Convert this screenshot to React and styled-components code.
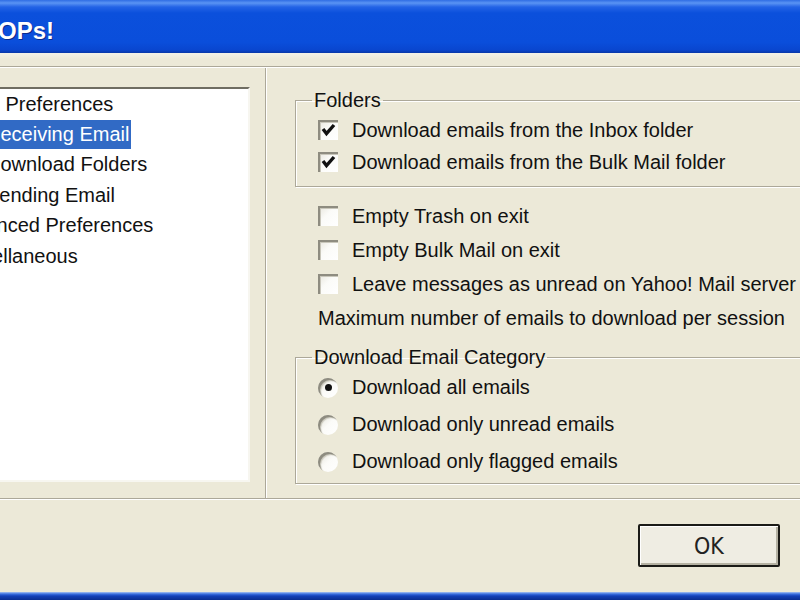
import React from 'react'
import styled, { createGlobalStyle } from 'styled-components'

const GlobalStyle = createGlobalStyle`
  html, body {
    margin: 0;
    padding: 0;
  }
  body {
    background: #ECE9D8;
    font-family: "Liberation Sans", Arial, sans-serif;
    overflow: hidden;
  }
`

const Screen = styled.div`
  width: 800px;
  height: 600px;
  overflow: hidden;
  display: flex;
  flex-direction: column;
  background: #ECE9D8;
  color: #111;
`

const TitleBar = styled.div`
  flex: none;
  height: 53px;
  display: flex;
  align-items: center;
  padding-top: 8px;
  box-sizing: border-box;
  background: linear-gradient(
    to bottom,
    #2f6de4 0,
    #5a94f4 3px,
    #2363e6 7px,
    #0b50dc 13px,
    #0a4edb 80%,
    #0946cf 94%,
    #0737a8 100%
  );
`

const TitleText = styled.span`
  margin-left: -34px;
  color: #fff;
  font: bold 24px "Liberation Sans", Arial, sans-serif;
  text-shadow: 1px 1px 0 #0a2a8e;
  white-space: nowrap;
`

const MenuGap = styled.div`
  flex: none;
  height: 14px;
  box-sizing: border-box;
  border-bottom: 1px solid #aca899;
  background: linear-gradient(to bottom, #f3f1e7, #ece9d8 6px);
`

const Main = styled.div`
  flex: none;
  height: 432px;
  box-sizing: border-box;
  display: flex;
  border-top: 1px solid #fff;
  border-bottom: 1px solid #aca899;
`

const LeftPane = styled.div`
  flex: none;
  width: 266px;
  box-sizing: border-box;
  border-right: 1px solid #aca899;
  padding-top: 19px;
`

const ListBox = styled.div`
  margin-left: -60px;
  width: 310px;
  height: 395px;
  box-sizing: border-box;
  background: #fff;
  border-top: 2px solid #6f6d62;
  border-left: 2px solid #6f6d62;
  border-right: 2px solid #f7f6f0;
  border-bottom: 2px solid #f7f6f0;
  overflow: hidden;
`

const TreeItem = styled.div`
  height: 30.4px;
  display: flex;
  align-items: center;
  padding-left: ${p => (p.$level ? 42 : 7)}px;
  font-size: 20px;
  white-space: nowrap;
`

const TreeLabel = styled.span`
  height: 29px;
  line-height: 29px;
  padding: 0 2px;
  background: ${p => (p.$selected ? '#316ac5' : 'transparent')};
  color: ${p => (p.$selected ? '#fff' : '#111')};
`

const RightPane = styled.div`
  flex: 1;
  min-width: 0;
  overflow: hidden;
  border-left: 1px solid #fff;
  padding: 22px 0 0 28px;
`

const Group = styled.fieldset`
  margin: 0 -40px 0 0;
  padding: ${p => p.$pad};
  min-width: 0;
  border: 1px solid #aca899;
  box-shadow: inset 1px 1px 0 #fff, 1px 1px 0 #fff;
`

const Legend = styled.legend`
  margin-left: 16px;
  padding: 0 2px;
  font-size: 20px;
  line-height: 20px;
  color: #111;
`

const Row = styled.label`
  display: flex;
  align-items: center;
  gap: 14px;
  height: ${p => p.$h}px;
  padding-left: ${p => p.$indent}px;
  font-size: 20px;
  white-space: nowrap;
`

const Loose = styled.div`
  margin-top: 12px;
  margin-bottom: 12px;
`

const CheckBox = styled.span`
  flex: none;
  width: 20px;
  height: 20px;
  display: flex;
  align-items: center;
  justify-content: center;
  box-sizing: border-box;
  background: linear-gradient(135deg, #e6e4da, #fbfbf8 45%, #fff);
  box-shadow: inset 2px 2px 0 #8e8c80, inset 3px 3px 0 #c9c7bb;
`

const RadioDot = styled.span`
  flex: none;
  width: 20px;
  height: 20px;
  border-radius: 50%;
  display: flex;
  align-items: center;
  justify-content: center;
  background: linear-gradient(135deg, #e2e0d6, #fbfbf8 50%, #fff);
  box-shadow: inset 2px 2px 0 #8e8c80, inset 3px 3px 1px #c9c7bb;

  &::after {
    content: '';
    width: 7px;
    height: 7px;
    border-radius: 50%;
    background: ${p => (p.$on ? '#111' : 'transparent')};
  }
`

const Footer = styled.div`
  flex: 1;
  display: flex;
  justify-content: flex-end;
  align-items: flex-start;
  border-top: 1px solid #fff;
  padding: 24px 20px 0 0;
`

const Button = styled.button`
  width: 142px;
  height: 43px;
  box-sizing: border-box;
  border: 2px solid #1b1b17;
  border-radius: 2px;
  background: #efede3;
  box-shadow: inset 1px 1px 0 #fff, inset -2px -2px 0 #b5b2a3;
  font: 23px "DejaVu Sans Condensed", "DejaVu Sans", sans-serif;
  color: #222;
  padding: 0;
`

const BottomFrame = styled.div`
  flex: none;
  height: 8px;
  background: linear-gradient(to bottom, #a9c4f0 0, #3a6fe0 2px, #1340b8 4px, #0a2d90 100%);
`

const Check = ({ checked }) => (
  <CheckBox>
    {checked && (
      <svg width="20" height="20" viewBox="0 0 20 20">
        <polyline points="5,9 8.5,13.5 16,5" fill="none" stroke="#111" strokeWidth="3.4" />
      </svg>
    )}
  </CheckBox>
)

const tree = [
  { label: 'Basic Preferences', level: 0 },
  { label: 'Receiving Email', level: 1, selected: true },
  { label: 'Download Folders', level: 1 },
  { label: 'Sending Email', level: 1 },
  { label: 'Advanced Preferences', level: 0 },
  { label: 'Miscellaneous', level: 0 },
]

export default function App() {
  return (
    <Screen>
      <GlobalStyle />
      <TitleBar>
        <TitleText>YPOPs!</TitleText>
      </TitleBar>
      <MenuGap />
      <Main>
        <LeftPane>
          <ListBox>
            {tree.map(t => (
              <TreeItem key={t.label} $level={t.level}>
                <TreeLabel $selected={t.selected}>{t.label}</TreeLabel>
              </TreeItem>
            ))}
          </ListBox>
        </LeftPane>
        <RightPane>
          <Group $pad="4px 0 8px 0">
            <Legend>Folders</Legend>
            <Row $h={32} $indent={22}>
              <Check checked />
              Download emails from the Inbox folder
            </Row>
            <Row $h={32} $indent={22}>
              <Check checked />
              Download emails from the Bulk Mail folder
            </Row>
          </Group>
          <Loose>
            <Row $h={34} $indent={23}>
              <Check />
              Empty Trash on exit
            </Row>
            <Row $h={34} $indent={23}>
              <Check />
              Empty Bulk Mail on exit
            </Row>
            <Row $h={34} $indent={23}>
              <Check />
              Leave messages as unread on Yahoo! Mail server
            </Row>
            <Row $h={34} $indent={23}>
              Maximum number of emails to download per session
            </Row>
          </Loose>
          <Group $pad="2px 0 3px 0">
            <Legend>Download Email Category</Legend>
            <Row $h={37} $indent={22}>
              <RadioDot $on />
              Download all emails
            </Row>
            <Row $h={37} $indent={22}>
              <RadioDot />
              Download only unread emails
            </Row>
            <Row $h={37} $indent={22}>
              <RadioDot />
              Download only flagged emails
            </Row>
          </Group>
        </RightPane>
      </Main>
      <Footer>
        <Button>OK</Button>
      </Footer>
      <BottomFrame />
    </Screen>
  )
}
